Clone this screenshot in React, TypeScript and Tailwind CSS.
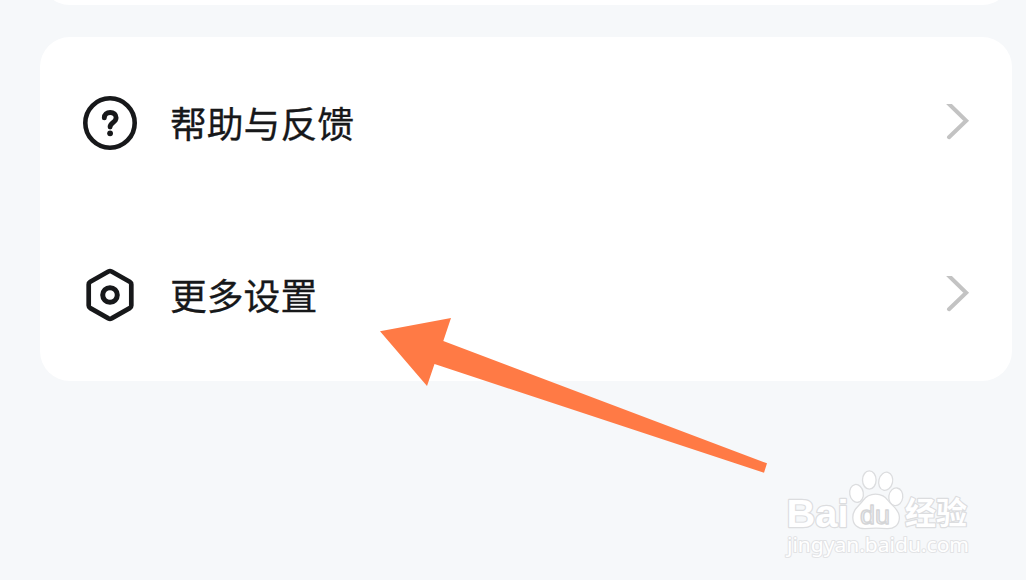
import type { ReactNode } from "react";

function HelpIcon() {
  return (
    <svg width="54" height="54" viewBox="0 0 54 54" fill="none" stroke="#17181a">
      <circle cx="27" cy="27" r="24.7" strokeWidth="4.6" />
      <path
        d="M21.3 21.9C21.3 18.4 23.8 16.5 27.2 16.5C30.7 16.5 33.1 18.6 33.1 21.7C33.1 24.2 31.7 25.3 29.8 26.7C28 28.1 27.1 29.1 27.1 31"
        strokeWidth="4.9"
        strokeLinecap="round"
      />
      <circle cx="27.1" cy="37.3" r="2.9" fill="#17181a" stroke="none" />
    </svg>
  );
}

function SettingsIcon() {
  return (
    <svg width="54" height="54" viewBox="0 0 54 54" fill="none" stroke="#17181a">
      <path
        d="M25.4 3.5Q27 2.7 28.6 3.5L46.7 13.7Q48.3 14.7 48.3 16.4V37.4Q48.3 39.2 46.7 40.1L28.6 50.4Q27 51.2 25.4 50.4L7.3 40.1Q5.7 39.2 5.7 37.4V16.4Q5.7 14.7 7.3 13.7Z"
        strokeWidth="4.7"
        strokeLinejoin="round"
      />
      <circle cx="27" cy="27" r="7.3" strokeWidth="5" />
    </svg>
  );
}

function Chevron() {
  return (
    <svg width="24" height="38" viewBox="0 0 24 38" fill="none">
      <path d="M2 1L20.2 18.8L3 35.2" stroke="#c3c3c3" strokeWidth="4" strokeLinecap="round" />
      <rect width="24" height="2" fill="#fff" />
    </svg>
  );
}

function Row({ icon, label }: { icon: ReactNode; label: string }) {
  return (
    <button type="button" className="flex h-[172px] w-full items-center pl-[43px] pr-[42px] text-left">
      {icon}
      <span className="-mt-px ml-[33px] flex-1 text-[36.8px] leading-none [-webkit-text-stroke:0.3px_#17181a]">
        {label}
      </span>
      <span className="-mt-1">
        <Chevron />
      </span>
    </button>
  );
}

function Arrow() {
  return (
    <svg className="pointer-events-none absolute left-[380px] top-[318px]" width="388" height="156" viewBox="0 0 388 156">
      <path d="M0 13.2L71 0L63.3 23L387 145.3L384 154.7L54.5 46L47 68Z" fill="#ff7a45" />
    </svg>
  );
}

function Watermark() {
  return (
    <svg
      className="pointer-events-none absolute left-[776px] top-[460px]"
      width="210"
      height="110"
      viewBox="0 0 210 110"
      fill="#fff"
      stroke="#dcdddf"
      strokeWidth="1.3"
      strokeLinejoin="round"
    >
      <text x="10.5" y="66.5" textLength="62" lengthAdjust="spacingAndGlyphs" className="font-['Liberation_Sans',sans-serif] text-[39.5px] font-bold [paint-order:stroke]" strokeWidth="2.4">
        Bai
      </text>
      <ellipse cx="80.5" cy="33.4" rx="6.8" ry="9" transform="rotate(-10 80.5 33.4)" />
      <ellipse cx="93.3" cy="20" rx="6.8" ry="9.2" />
      <ellipse cx="109.7" cy="21.3" rx="6.9" ry="9.2" transform="rotate(14 109.7 21.3)" />
      <ellipse cx="119.8" cy="36.8" rx="7" ry="8.9" transform="rotate(8 119.8 36.8)" />
      <path d="M87 40.5C91 35 95 34.2 99.5 34.2C105 34.2 109 35.8 112.5 41C116 46 123.4 49.2 123.4 57.5C123.4 65.5 117.5 69 111 68.7C104 68 96 68 89.5 68.7C82 69 76.8 65 76.8 57.5C76.8 49.5 82.5 46.5 87 40.5Z" />
      <text x="84" y="63.5" textLength="30" lengthAdjust="spacingAndGlyphs" className="font-['Liberation_Sans',sans-serif] text-[25px]" fill="#eeeff1" stroke="#d4d5d7">
        du
      </text>
      <text x="129" y="64.3" textLength="62" lengthAdjust="spacingAndGlyphs" className="font-['Noto_Sans_CJK_SC',sans-serif] text-[31px] font-bold [paint-order:stroke]" strokeWidth="2.4">
        经验
      </text>
      <text x="11" y="92" textLength="182" lengthAdjust="spacingAndGlyphs" className="font-['Noto_Sans',sans-serif] text-[20.5px] [paint-order:stroke]" stroke="#e2e3e5" strokeWidth="2">
        jingyan.baidu.com
      </text>
    </svg>
  );
}

export default function App() {
  return (
    <div className="relative h-[580px] w-[1026px] overflow-hidden bg-[#f6f8fa] font-['Noto_Sans_CJK_SC',sans-serif] text-[#17181a]">
      <div className="-mt-[75px] ml-10 h-20 w-[972px] rounded-[30px] bg-white" />
      <div className="ml-10 mt-8 w-[972px] rounded-[30px] bg-white">
        <Row icon={<HelpIcon />} label="帮助与反馈" />
        <Row icon={<SettingsIcon />} label="更多设置" />
      </div>
      <Arrow />
      <Watermark />
    </div>
  );
}
